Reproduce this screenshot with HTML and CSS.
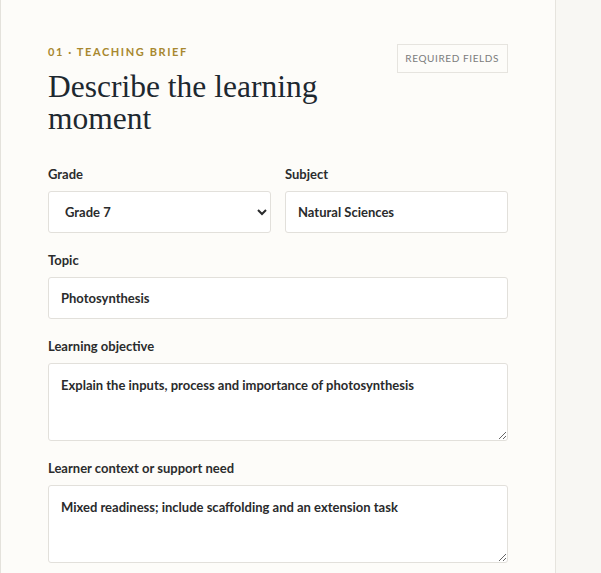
FILE: index.html
```html
<!DOCTYPE html>
<html lang="en">
<head>
<meta charset="utf-8">
<title>Teaching brief</title>
<link rel="stylesheet" href="styles.css">
</head>
<body>
<main class="panel">
  <header class="head">
    <div class="head-text">
      <p class="eyebrow">01 · Teaching brief</p>
      <h1 class="title">Describe the learning moment</h1>
    </div>
    <span class="badge">Required fields</span>
  </header>

  <form class="form">
    <div class="row">
      <div class="field">
        <label class="label" for="grade">Grade</label>
        <select id="grade" class="control select">
          <option>Grade 7</option>
        </select>
      </div>
      <div class="field">
        <label class="label" for="subject">Subject</label>
        <input id="subject" class="control" type="text" value="Natural Sciences">
      </div>
    </div>
    <div class="field">
      <label class="label" for="topic">Topic</label>
      <input id="topic" class="control" type="text" value="Photosynthesis">
    </div>
    <div class="field">
      <label class="label" for="objective">Learning objective</label>
      <textarea id="objective" class="control area">Explain the inputs, process and importance of photosynthesis</textarea>
    </div>
    <div class="field">
      <label class="label" for="context">Learner context or support need</label>
      <textarea id="context" class="control area">Mixed readiness; include scaffolding and an extension task</textarea>
      <p class="hint">Mention language support, pacing or resources so the plan fits your learners.</p>
    </div>
  </form>
</main>
<aside class="side"></aside>
</body>
</html>
```

FILE: styles.css
```css
* { box-sizing: border-box; }

html, body {
  margin: 0;
  height: 100%;
}

body {
  display: flex;
  background: #f8f7f3;
  font-family: "Lato", "Liberation Sans", sans-serif;
  color: #2a2b2c;
  overflow: hidden;
}

.panel {
  width: 556px;
  flex: none;
  min-height: 100%;
  background: #fdfcf9;
  border-left: 1px solid #e4e2dc;
  border-right: 1px solid #e6e4de;
  padding: 44px 47px 0 47px;
}

.side {
  flex: 1;
  background: #f8f7f3;
}

.head {
  display: flex;
  justify-content: space-between;
  align-items: flex-start;
  gap: 16px;
}

.head-text {
  flex: 1;
  min-width: 0;
}

.eyebrow {
  margin: 0;
  font-size: 11px;
  line-height: 16px;
  font-weight: 700;
  letter-spacing: 1.6px;
  text-transform: uppercase;
  color: #a8882f;
}

.title {
  margin: 11px 0 0;
  max-width: 330px;
  font-family: "Liberation Serif", "DejaVu Serif", serif;
  font-weight: 400;
  font-size: 31.5px;
  line-height: 32px;
  color: #1d2830;
}

.badge {
  flex: none;
  border: 1px solid #e6e4df;
  padding: 0 8px 0 7px;
  height: 29px;
  line-height: 27px;
  font-size: 10px;
  letter-spacing: 0.6px;
  text-transform: uppercase;
  color: #7b7b7b;
  background: #fdfcf9;
}

.form {
  margin-top: 30px;
  display: flex;
  flex-direction: column;
  gap: 18px;
}

.row {
  display: grid;
  grid-template-columns: 1fr 1fr;
  gap: 14px;
}

.field {
  display: flex;
  flex-direction: column;
}

.label {
  font-size: 13px;
  line-height: 18px;
  font-weight: 700;
  color: #2b2c2d;
  margin-bottom: 8px;
}

.control {
  width: 100%;
  height: 42px;
  margin: 0;
  border: 1px solid #e2e0db;
  border-radius: 3px;
  background: #ffffff;
  padding: 0 12px;
  font-family: "Lato", "Liberation Sans", sans-serif;
  font-size: 13px;
  font-weight: 700;
  color: #2a2b2c;
  outline: none;
}

.select {
  padding: 0 4px 0 12px;
}

.area {
  height: 78px;
  padding: 12px;
  line-height: 18px;
  resize: vertical;
  display: block;
}

.hint {
  margin: 8px 0 0;
  font-size: 12px;
  line-height: 16px;
  color: #8b8a86;
}
```
